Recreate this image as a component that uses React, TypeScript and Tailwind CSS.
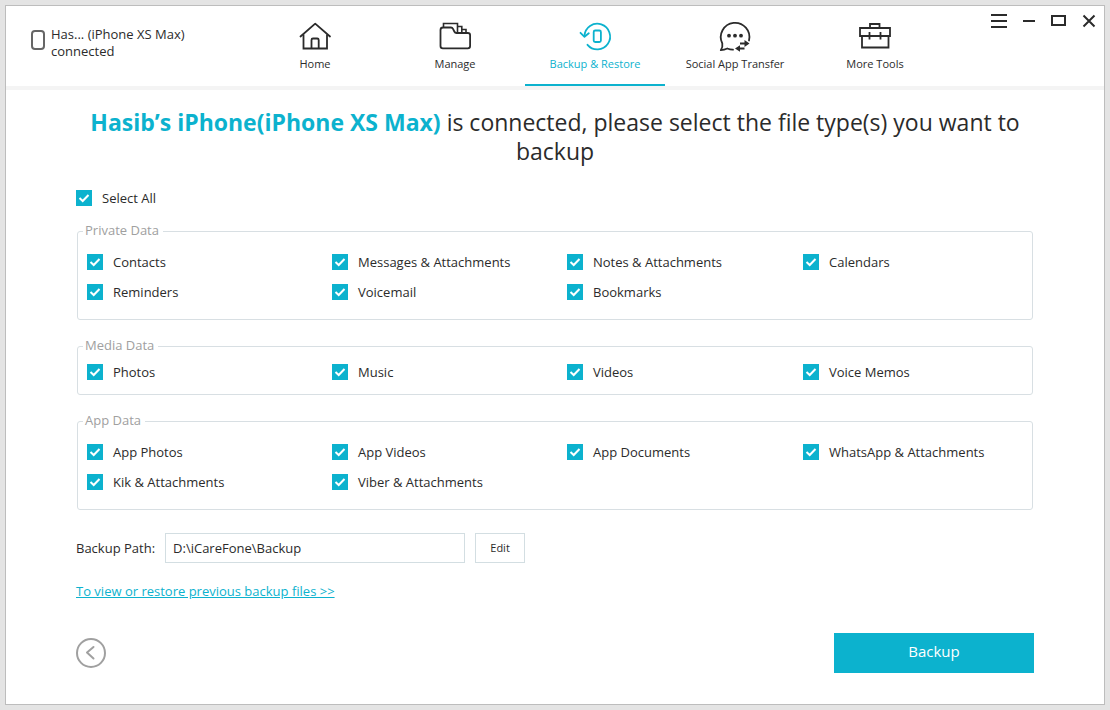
import { useState } from "react"
import type { ReactNode } from "react"

const groups = [
  {
    title: "Private Data",
    padding: "pt-2 pb-3",
    items: ["Contacts", "Messages & Attachments", "Notes & Attachments", "Calendars", "Reminders", "Voicemail", "Bookmarks"],
  },
  {
    title: "Media Data",
    padding: "pt-[3px] pb-[7px]",
    items: ["Photos", "Music", "Videos", "Voice Memos"],
  },
  {
    title: "App Data",
    padding: "pt-2 pb-3",
    items: ["App Photos", "App Videos", "App Documents", "WhatsApp & Attachments", "Kik & Attachments", "Viber & Attachments"],
  },
]

const allItems = groups.flatMap((g) => g.items)

const NavIcon = ({ children }: { children: ReactNode }) => (
  <svg width="36" height="32" viewBox="0 0 36 32" fill="none" stroke="currentColor" strokeWidth="1.8" strokeLinecap="round" strokeLinejoin="round" aria-hidden="true">
    {children}
  </svg>
)

const tabs = [
  {
    label: "Home",
    icon: (
      <NavIcon>
        <path d="M3.5 16.5 18.2 3.6 33 16.5" />
        <path d="M6.5 14.5v14H30v-14" strokeLinecap="butt" strokeLinejoin="miter" />
        <path d="M14.5 28V20q0-1.5 1.500-1.500h4.200q1.500 0 1.500 1.500v8" />
      </NavIcon>
    ),
  },
  {
    label: "Manage",
    icon: (
      <NavIcon>
        <path d="M3.500 10v16q0 2.300 2.300 2.300h25q2.300 0 2.300-2.300V15q0-2-2.300-2H19.500q-1.500 0-2.200-1.500l-1.300-2.600q-.7-1.400-2-1.400H6q-2.500 0-2.500 2.500z" />
        <g strokeWidth="1.600" strokeLinejoin="miter" strokeLinecap="butt">
          <path d="M6.500 7.500V3.500h14v9" />
          <path d="M20.500 6.500h4.300v6M24.800 9.500h4.200v3" />
        </g>
      </NavIcon>
    ),
  },
  {
    label: "Backup & Restore",
    icon: (
      <NavIcon>
        <path d="M7.500 16A12.800 12.800 0 1 1 10.500 24.800" />
        <path d="m3.500 12.800 4 4 4.300-3.500" />
        <rect x="16.700" y="10.500" width="7.200" height="11.500" rx="1.500" />
      </NavIcon>
    ),
  },
  {
    label: "Social App Transfer",
    icon: (
      <NavIcon>
        <path d="M32 20.500A14.300 14.300 0 1 0 5.300 23.500Q6 27 3.800 30.200q3.500-.3 6.500-1.700 3 1.300 5.700 1.200" />
        <g fill="currentColor" stroke="none">
          <circle cx="12" cy="15.700" r="1.900" />
          <circle cx="18" cy="15.700" r="1.900" />
          <circle cx="24" cy="15.700" r="1.900" />
          <path d="M23 22.500h4.500v-2.500l5 3.500-5 3.500v-2.500H23zM27.500 27.500H23v-2.300l-5 3.300 5 3.300v-2.300h4.500z" />
        </g>
      </NavIcon>
    ),
  },
  {
    label: "More Tools",
    icon: (
      <NavIcon>
        <g strokeLinecap="butt" strokeLinejoin="miter">
          <path d="M3 8h30v8H3zM5 16v11.500h26.500V16" />
          <path d="M13 8V4h9.500v4M12.500 12v7.500M23.500 12v7.500" />
        </g>
      </NavIcon>
    ),
  },
]

const windowControls = [
  { label: "Menu", path: "M0 2h16M0 8h16M0 14h16" },
  { label: "Minimize", path: "M2 8h12" },
  { label: "Maximize", path: "M1 3h13v9H1z" },
  { label: "Close", path: "m2.500 2.500 11 11M13.500 2.500l-11 11" },
]

type CheckProps = {
  label: string
  checked: boolean
  onChange: () => void
}

const Check = ({ label, checked, onChange }: CheckProps) => (
  <label className="flex items-center gap-2.5 whitespace-nowrap">
    <span className="grid size-4 shrink-0">
      <input
        type="checkbox"
        checked={checked}
        onChange={onChange}
        className="peer col-start-1 row-start-1 size-4 appearance-none border border-[#0cb2ce] bg-white checked:bg-[#0cb2ce]"
      />
      <svg viewBox="0 0 16 16" fill="none" stroke="white" strokeWidth="2" className="pointer-events-none invisible col-start-1 row-start-1 size-4 peer-checked:visible">
        <path d="m3.500 8 3.200 3L12.500 5" />
      </svg>
    </span>
    {label}
  </label>
)

export default function App() {
  const [selected, setSelected] = useState<string[]>(allItems)
  const [activeTab, setActiveTab] = useState("Backup & Restore")
  const [path, setPath] = useState("D:\\iCareFone\\Backup")

  const toggle = (item: string) =>
    setSelected((prev) => (prev.includes(item) ? prev.filter((i) => i !== item) : [...prev, item]))

  const allSelected = selected.length === allItems.length

  return (
    <div className="flex min-h-screen bg-[#e4e4e4] p-[5px] font-['Open_Sans','Noto_Sans',sans-serif] text-[13px] leading-5 text-[#2b2b2b]">
      <div className="flex flex-1 flex-col border border-[#bdbdbd] bg-white">
        {/* Header */}
        <header className="flex items-start border-b-4 border-[#f4f4f4]">
          <div className="flex w-[239px] items-start gap-1.5 pt-5 pl-[25px]">
            <svg width="14" height="20" viewBox="0 0 14 20" fill="none" stroke="#666" strokeWidth="2" className="mt-1" aria-hidden="true">
              <rect x="1" y="1" width="12" height="18" rx="3" />
            </svg>
            <p className="leading-[17px]">
              Has... (iPhone XS Max)
              <br />
              connected
            </p>
          </div>

          <nav className="flex">
            {tabs.map((tab) => (
              <button
                key={tab.label}
                onClick={() => setActiveTab(tab.label)}
                className={`flex h-20 w-[140px] flex-col items-center border-b-2 pt-3.5 text-[11px] ${
                  tab.label === activeTab ? "border-[#0cb2ce] text-[#0cb2ce]" : "border-transparent"
                }`}
              >
                {tab.icon}
                <span className="leading-6">{tab.label}</span>
              </button>
            ))}
          </nav>

          <div className="ml-auto flex">
            {windowControls.map((control) => (
              <button key={control.label} aria-label={control.label} className="flex size-[30px] items-center justify-center">
                <svg width="16" height="16" viewBox="0 0 16 16" fill="none" stroke="currentColor" strokeWidth="2" aria-hidden="true">
                  <path d={control.path} />
                </svg>
              </button>
            ))}
          </div>
        </header>

        {/* Content */}
        <main className="flex flex-1 flex-col px-[70px] pt-[18px] pb-[31px]">
          <h1 className="text-center text-[23px] leading-[29px]">
            <strong className="font-bold text-[#0cb2ce]">Hasib’s iPhone(iPhone XS Max)</strong> is connected, please select the file type(s) you want to backup
          </h1>

          <div className="mt-[22px] flex">
            <Check label="Select All" checked={allSelected} onChange={() => setSelected(allSelected ? [] : allItems)} />
          </div>

          <div className="mx-px mt-[13px] flex flex-col gap-4">
            {groups.map((group) => (
              <fieldset key={group.title} className={`rounded-[3px] border border-[#d8dfe3] px-[9px] ${group.padding}`}>
                <legend className="-ml-1 pr-1 pl-0.5 pb-0.5 leading-[18px] text-[#a0a0a0]">{group.title}</legend>
                <div className="-mt-0.5 grid auto-rows-[30px] grid-cols-[245fr_235fr_236fr_220fr]">
                  {group.items.map((item) => (
                    <Check key={item} label={item} checked={selected.includes(item)} onChange={() => toggle(item)} />
                  ))}
                </div>
              </fieldset>
            ))}
          </div>

          {/* Backup path */}
          <div className="mt-[23px] flex items-center gap-2.5">
            <label htmlFor="backup-path">Backup Path:</label>
            <input
              id="backup-path"
              value={path}
              onChange={(e) => setPath(e.target.value)}
              className="h-[30px] w-[300px] border border-[#d3dee2] px-[7px] outline-none"
            />
            <button className="h-[30px] w-[50px] border border-[#d3dee2] text-[11px]">Edit</button>
          </div>

          <a href="#previous" className="mt-[18px] self-start text-[#0cb2ce] underline">
            To view or restore previous backup files &gt;&gt;
          </a>

          <div className="mt-auto flex items-center justify-between">
            <button aria-label="Back" className="text-[#a0a0a0]">
              <svg width="30" height="30" viewBox="0 0 30 30" fill="none" stroke="currentColor" strokeWidth="2" strokeLinecap="round" strokeLinejoin="round">
                <circle cx="15" cy="15" r="14" />
                <path d="m17.500 9-6.500 5.500 6.500 6" />
              </svg>
            </button>
            <button className="h-10 w-[200px] bg-[#0cb2ce] pb-1 text-[15px] text-white">Backup</button>
          </div>
        </main>
      </div>
    </div>
  )
}
